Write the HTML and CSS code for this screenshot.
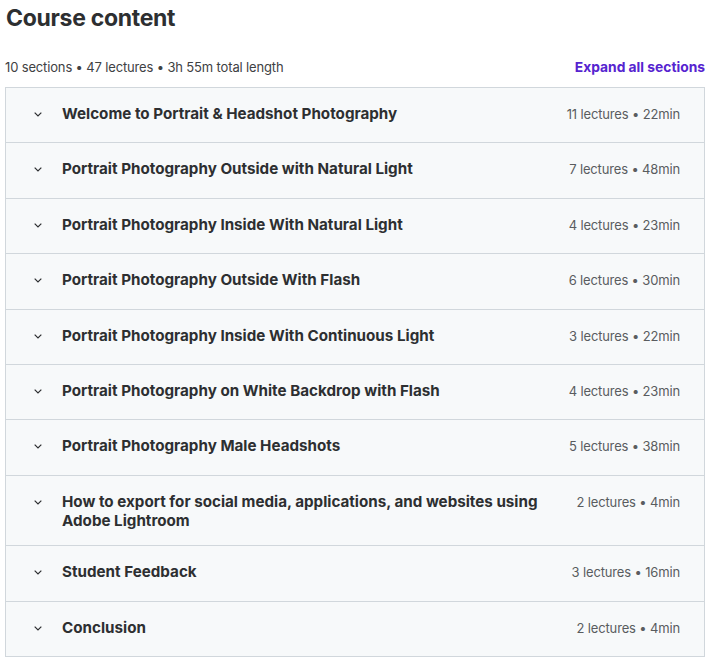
FILE: index.html
```html
<!DOCTYPE html>
<html lang="en">
<head>
<meta charset="utf-8">
<title>Course content</title>
<link rel="stylesheet" href="styles.css">
</head>
<body>
<div class="course">
  <h2 class="title">Course content</h2>
  <div class="summary">
    <span class="meta">10 sections • 47 lectures • 3h 55m total length</span>
    <button class="expand">Expand all sections</button>
  </div>
  <div class="sections">
    <div class="section">
      <svg class="chev" viewBox="0 0 24 24"><path d="M7 10l5 5 5-5"/></svg>
      <span class="name">Welcome to Portrait &amp; Headshot Photography</span>
      <span class="info">11 lectures • 22min</span>
    </div>
    <div class="section">
      <svg class="chev" viewBox="0 0 24 24"><path d="M7 10l5 5 5-5"/></svg>
      <span class="name">Portrait Photography Outside with Natural Light</span>
      <span class="info">7 lectures • 48min</span>
    </div>
    <div class="section">
      <svg class="chev" viewBox="0 0 24 24"><path d="M7 10l5 5 5-5"/></svg>
      <span class="name">Portrait Photography Inside With Natural Light</span>
      <span class="info">4 lectures • 23min</span>
    </div>
    <div class="section">
      <svg class="chev" viewBox="0 0 24 24"><path d="M7 10l5 5 5-5"/></svg>
      <span class="name">Portrait Photography Outside With Flash</span>
      <span class="info">6 lectures • 30min</span>
    </div>
    <div class="section">
      <svg class="chev" viewBox="0 0 24 24"><path d="M7 10l5 5 5-5"/></svg>
      <span class="name">Portrait Photography Inside With Continuous Light</span>
      <span class="info">3 lectures • 22min</span>
    </div>
    <div class="section">
      <svg class="chev" viewBox="0 0 24 24"><path d="M7 10l5 5 5-5"/></svg>
      <span class="name">Portrait Photography on White Backdrop with Flash</span>
      <span class="info">4 lectures • 23min</span>
    </div>
    <div class="section">
      <svg class="chev" viewBox="0 0 24 24"><path d="M7 10l5 5 5-5"/></svg>
      <span class="name">Portrait Photography Male Headshots</span>
      <span class="info">5 lectures • 38min</span>
    </div>
    <div class="section">
      <svg class="chev" viewBox="0 0 24 24"><path d="M7 10l5 5 5-5"/></svg>
      <span class="name">How to export for social media, applications, and websites using Adobe Lightroom</span>
      <span class="info">2 lectures • 4min</span>
    </div>
    <div class="section">
      <svg class="chev" viewBox="0 0 24 24"><path d="M7 10l5 5 5-5"/></svg>
      <span class="name">Student Feedback</span>
      <span class="info">3 lectures • 16min</span>
    </div>
    <div class="section">
      <svg class="chev" viewBox="0 0 24 24"><path d="M7 10l5 5 5-5"/></svg>
      <span class="name">Conclusion</span>
      <span class="info">2 lectures • 4min</span>
    </div>
  </div>
</div>
</body>
</html>
```
FILE: styles.css
```css
html, body {
  margin: 0;
  padding: 0;
  background: #ffffff;
}
body {
  font-family: Inter, "Noto Sans", "Liberation Sans", sans-serif;
  color: #2d2f31;
}
.course {
  padding: 0 0 0 5px;
  width: 700px;
}
.title {
  margin: 0;
  padding-top: 4px;
  font-size: 23px;
  line-height: 28px;
  font-weight: 700;
  letter-spacing: -0.3px;
  padding-left: 1px;
}
.summary {
  display: flex;
  justify-content: space-between;
  align-items: center;
  margin-top: 25px;
  height: 20px;
}
.meta {
  font-size: 13px;
  letter-spacing: -0.15px;
  color: #3e4143;
}
.expand {
  border: 0;
  background: none;
  padding: 0;
  font-family: inherit;
  font-size: 13.8px;
  font-weight: 700;
  color: #5624d0;
}
.sections {
  margin-top: 10px;
  border: 1px solid #d1d7dc;
  border-bottom: 0;
}
.section {
  display: flex;
  align-items: flex-start;
  background: #f7f9fa;
  border-bottom: 1px solid #d1d7dc;
  padding: 16px 24px 15.4px;
  min-height: 23px;
}
.chev {
  flex: none;
  width: 16px;
  height: 16px;
  margin: 2px 16px 0 0;
  fill: none;
  stroke: #2d2f31;
  stroke-width: 1.8;
}
.name {
  flex: 1;
  font-size: 15.2px;
  font-weight: 700;
  line-height: 19px;
  padding-right: 30px;
}
.info {
  flex: none;
  font-size: 13px;
  letter-spacing: -0.15px;
  line-height: 19px;
  color: #595c5f;
  margin-top: 1px;
}
```
